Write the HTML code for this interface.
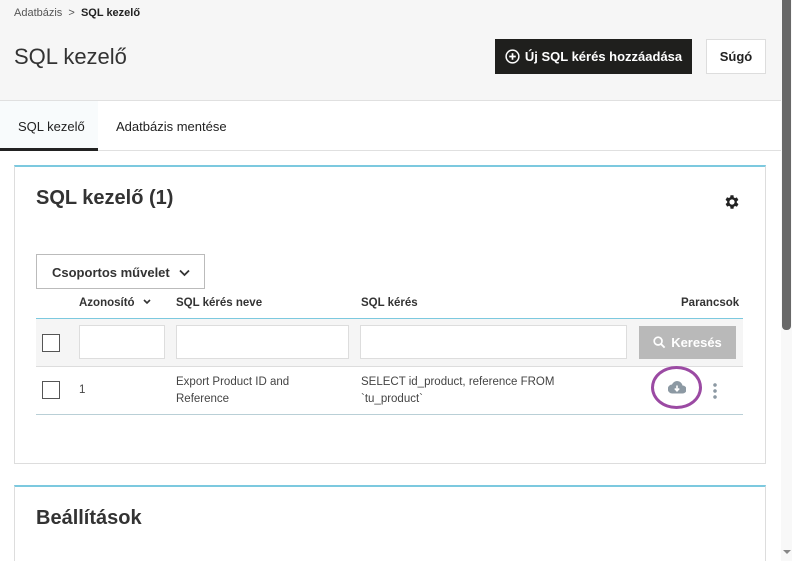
<!DOCTYPE html>
<html style="overflow:hidden"><head><meta charset="utf-8"><style>
*{box-sizing:border-box;margin:0;padding:0}
html,body{width:792px;height:561px;overflow:hidden}
body{background:#fff;font-family:"Liberation Sans",sans-serif;color:#363a41;position:relative}
.hdr{position:absolute;left:0;top:0;width:781px;height:101px;background:#f6f6f6;border-bottom:1px solid #e0e0e0}
.bc{position:absolute;left:14px;top:7px;font-size:11px;color:#555}
.bc b{color:#222}
h1{position:absolute;left:14px;top:44px;font-size:22px;font-weight:normal;color:#333}
.btn1{position:absolute;left:495px;top:39px;width:197px;height:35px;background:#1f1f1d;color:#fff;font-weight:bold;font-size:13px;display:flex;align-items:center;justify-content:center;gap:5px}
.btn2{position:absolute;left:706px;top:39px;width:60px;height:35px;background:#fff;border:1px solid #ddd;font-weight:bold;font-size:13px;color:#222;display:flex;align-items:center;justify-content:center}
.tabs{position:absolute;left:0;top:101px;width:781px;height:50px;border-bottom:1px solid #e0e0e0}
.tab1{position:absolute;left:0;top:0;width:98px;height:50px;background:#f8fbfc;border-bottom:3px solid #222;font-size:13px;padding:18px 0 0 18px;color:#222}
.tab2{position:absolute;left:116px;top:18px;font-size:13px;color:#222}
.card{position:absolute;left:14px;width:752px;background:#fff;border:1px solid #ddd;border-top:2px solid #7cc9df}
.t{position:absolute;left:36px;font-size:20px;font-weight:bold;color:#333}
.dd{position:absolute;left:36px;top:254px;width:169px;height:35px;border:1px solid #bbb;font-size:13px;font-weight:bold;color:#333;padding:10px 0 0 15px}
.th{position:absolute;top:297px;font-size:11.5px;font-weight:bold;color:#333}
.fr{position:absolute;left:36px;top:318px;width:707px;height:49px;background:#f5f5f5;border-top:1px solid #7cc9df;border-bottom:1px solid #ddd}
.inp{position:absolute;top:325px;height:34px;background:#fff;border:1px solid #ddd}
.cb{position:absolute;left:42px;width:18px;height:18px;border:1px solid #555;background:#fff}
.srch{position:absolute;left:639px;top:326px;width:97px;height:33px;background:#b9b9b9;color:#fff;font-weight:bold;font-size:13px;display:flex;align-items:center;justify-content:center;gap:5px}
.cell{position:absolute;font-size:11.5px;color:#444;line-height:17px}
.sb{position:absolute;left:781px;top:0;width:11px;height:561px;background:#f8f8f8}
.thumb{position:absolute;left:782px;top:0;width:9px;height:330px;background:#686868;border-radius:0 0 4px 4px}
</style></head><body>
<div class="hdr">
<div class="bc">Adatbázis &nbsp;&gt;&nbsp; <b>SQL kezelő</b></div>
<h1>SQL kezelő</h1>
<div class="btn1"><svg width="15" height="15" viewBox="0 0 16 16"><circle cx="8" cy="8" r="6.8" fill="none" stroke="#fff" stroke-width="1.6"/><path d="M8 4.5v7M4.5 8h7" stroke="#fff" stroke-width="1.8"/></svg>Új SQL kérés hozzáadása</div>
<div class="btn2">Súgó</div>
</div>
<div class="tabs"><div class="tab1">SQL kezelő</div><div class="tab2">Adatbázis mentése</div></div>

<div class="card" style="top:165px;height:299px"></div>
<div class="t" style="top:187px">SQL kezelő (1)</div>
<svg style="position:absolute;left:723px;top:193px" width="18" height="18" viewBox="0 0 24 24"><path fill="#222" d="M19.4 13a7.5 7.5 0 000-2l2.1-1.6-2-3.5-2.5 1a7 7 0 00-1.7-1L15 3h-4l-.4 2.7a7 7 0 00-1.7 1l-2.5-1-2 3.5L6.6 11a7.5 7.5 0 000 2l-2.1 1.6 2 3.5 2.5-1a7 7 0 001.7 1L11 21h4l.4-2.7a7 7 0 001.7-1l2.5 1 2-3.5zM13 15.5a3.5 3.5 0 110-7 3.5 3.5 0 010 7z" transform="translate(-1 0)"/></svg>
<div class="dd">Csoportos művelet<svg style="position:absolute;left:142px;top:14px" width="11" height="8" viewBox="0 0 11 8"><path d="M1 1.5l4.5 4.5 4.5-4.5" fill="none" stroke="#333" stroke-width="1.8"/></svg></div>
<div class="th" style="left:79px">Azonosító</div>
<svg style="position:absolute;left:143px;top:299px" width="8" height="6" viewBox="0 0 8 6"><path d="M1 1l3 3 3-3" fill="none" stroke="#333" stroke-width="1.6"/></svg>
<div class="th" style="left:176px">SQL kérés neve</div>
<div class="th" style="left:361px">SQL kérés</div>
<div class="th" style="left:681px">Parancsok</div>
<div class="fr"></div>
<div class="cb" style="top:334px"></div>
<div class="inp" style="left:79px;width:86px"></div>
<div class="inp" style="left:176px;width:173px"></div>
<div class="inp" style="left:360px;width:267px"></div>
<div class="srch"><svg width="13" height="13" viewBox="0 0 14 14"><circle cx="5.5" cy="5.5" r="4.2" fill="none" stroke="#fff" stroke-width="1.8"/><path d="M8.5 8.5l4 4" stroke="#fff" stroke-width="2"/></svg>Keresés</div>
<div class="cb" style="top:381px"></div>
<div class="cell" style="left:79px;top:382px">1</div>
<div class="cell" style="left:176px;top:374px">Export Product ID and<br>Reference</div>
<div class="cell" style="left:361px;top:374px">SELECT id_product, reference FROM<br>`tu_product`</div>
<div style="position:absolute;left:36px;top:414px;width:707px;height:1px;background:#b9cfd6"></div>
<div style="position:absolute;left:651px;top:366px;width:51px;height:43px;border:3px solid #9b4aa3;border-radius:50%"></div>
<svg style="position:absolute;left:668px;top:380px" width="18" height="14" viewBox="0 0 18 14"><path fill="#8c99a3" d="M14.5 5.5A5.5 5.5 0 004 4.5 4.5 4.5 0 004.5 13.5h10a4 4 0 000-8z"/><path d="M9 5.5v5M6.8 8.5L9 10.8l2.2-2.3" stroke="#fff" stroke-width="1.6" fill="none"/></svg>
<div style="position:absolute;left:713px;top:382px;width:4px;height:17px;background:radial-gradient(circle,#8c99a3 1.6px,transparent 2px) 0 0/4px 6px"></div>

<div class="card" style="top:485px;height:76px;border-bottom:none"></div>
<div class="t" style="top:507px">Beállítások</div>
<div class="sb"></div><div class="thumb"></div>
<div style="position:absolute;left:783px;top:550px;width:0;height:0;border-left:4px solid transparent;border-right:4px solid transparent;border-top:4px solid #888"></div>
</body></html>
